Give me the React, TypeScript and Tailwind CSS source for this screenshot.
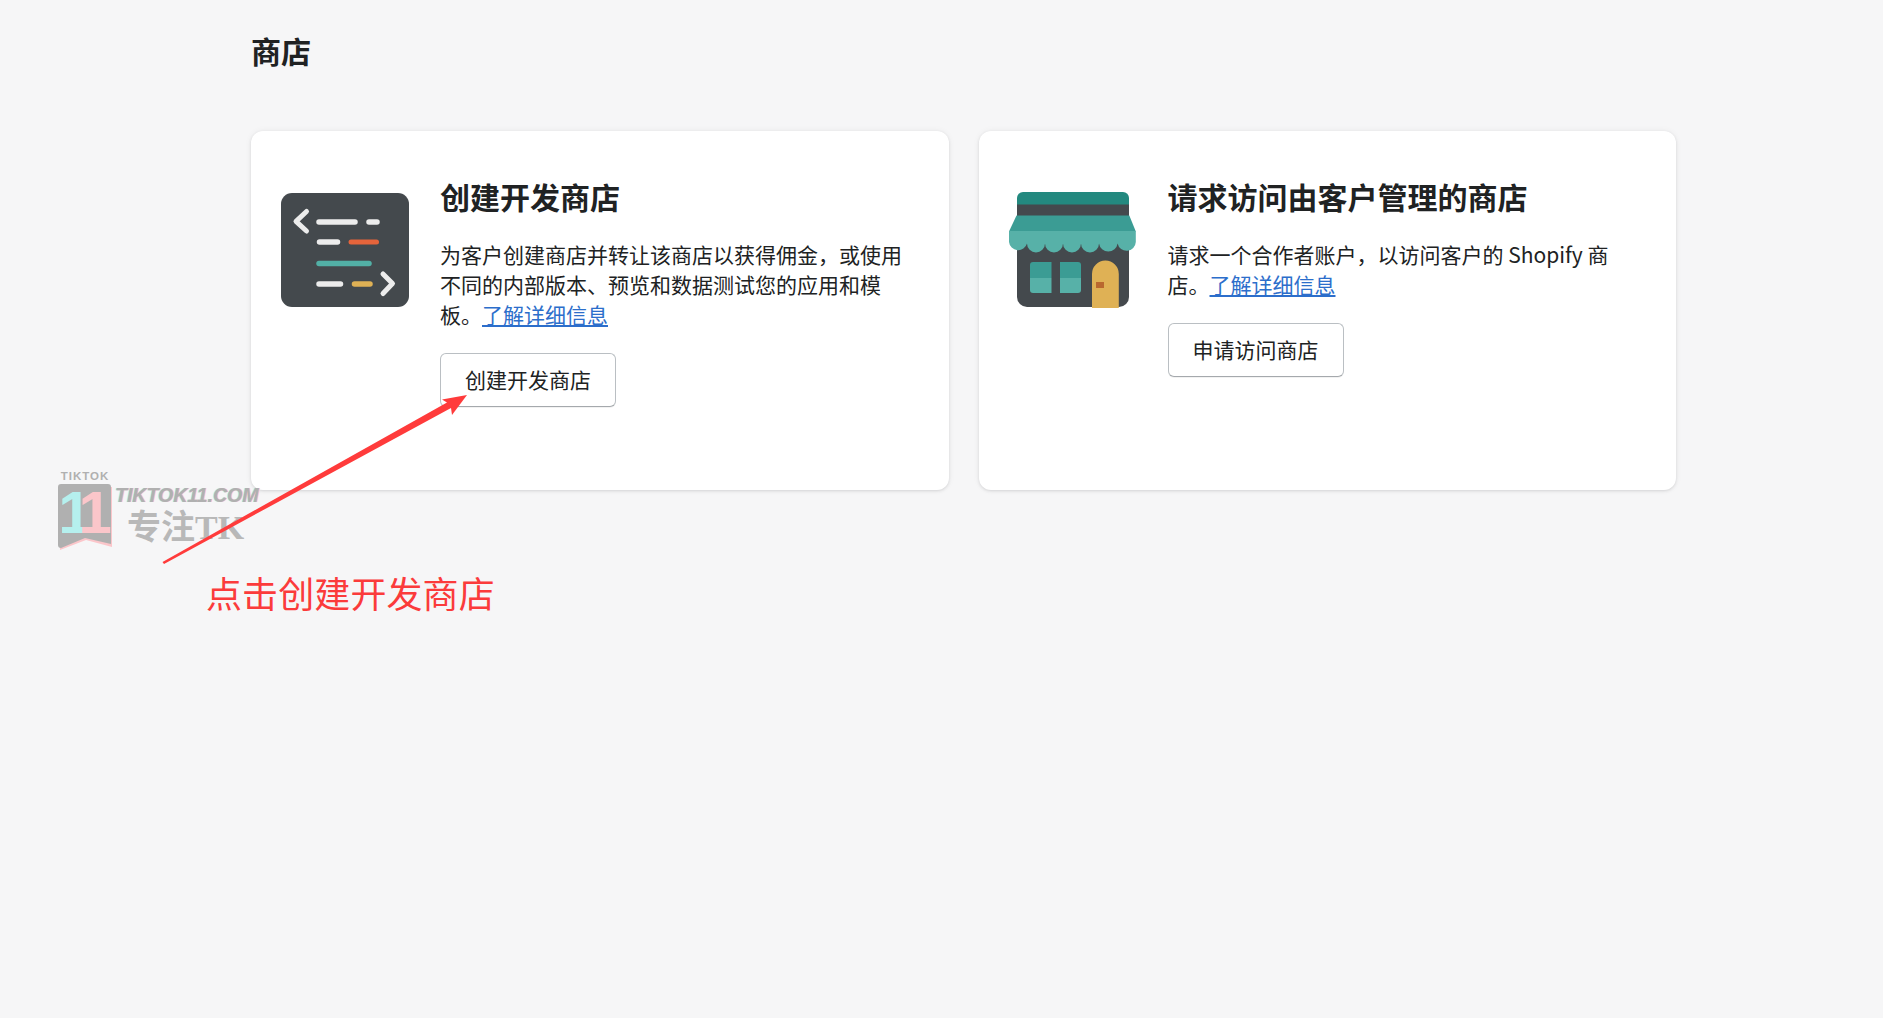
import React from "react";

const font = { fontFamily: '"Noto Sans CJK SC", "Noto Sans", sans-serif' };
const sans = { fontFamily: '"Liberation Sans", sans-serif' };

function CodeIcon() {
  return (
    <svg width="128" height="114" viewBox="0 0 128 114" className="mt-px block">
      <rect width="128" height="114" rx="11" fill="#44494d" />
      <g fill="none" stroke="#ececec" strokeLinecap="round" strokeLinejoin="round">
        <path d="M25.5 18.5 15 28.3 25.5 38" strokeWidth="5" />
        <path d="M102 81 111.5 90.5 102 100.5" strokeWidth="5" />
        <path d="M38 29H74M88 29H96M38.5 49H56.5M38 91H59.5" strokeWidth="5.5" />
        <path d="M70 49H95.5" stroke="#e5643b" strokeWidth="5" />
        <path d="M38 70.5H88" stroke="#52b0a6" strokeWidth="5.5" />
        <path d="M73.5 91H89" stroke="#dfb155" strokeWidth="5.5" />
      </g>
    </svg>
  );
}

function StoreIcon() {
  return (
    <svg width="127" height="116" viewBox="0 0 127 116" className="block">
      <path d="M8 12H120V105a10 10 0 0 1-10 10H18a10 10 0 0 1-10-10Z" fill="#44494d" />
      <path d="M8 6a6 6 0 0 1 6-6H114a6 6 0 0 1 6 6V12.5H8Z" fill="#23897f" />
      <path d="M7.5 23.5H120.3L126.8 39.5H0Z" fill="#3b9c94" />
      <path
        d="M0 39H126.8V50a9.2 9.2 0 0 1-18.2 1.5 9.4 9.4 0 0 1-18.6 0 9 9 0 0 1-18 0 9 9 0 0 1-18 0 9 9 0 0 1-18 0 9 9 0 0 1-18 0A9.2 9.2 0 0 1 0 50Z"
        fill="#57b1a8"
      />
      <path d="M21 73a3 3 0 0 1 3-3H42.5V86H21Z" fill="#3b9c94" />
      <path d="M21 86H42.5V101H24a3 3 0 0 1-3-3Z" fill="#57b1a8" />
      <path d="M51 70H69a3 3 0 0 1 3 3V86H51Z" fill="#3b9c94" />
      <path d="M51 86H72V98a3 3 0 0 1-3 3H51Z" fill="#57b1a8" />
      <path d="M83 82a13.4 13.4 0 0 1 26.8 0V116H83Z" fill="#dfb155" />
      <rect x="87" y="90" width="8" height="6" fill="#b9682f" />
    </svg>
  );
}

function Card({
  icon,
  title,
  body,
  action,
}: {
  icon: React.ReactNode;
  title: string;
  body: string;
  action: string;
}) {
  return (
    <div className="flex h-[359px] w-[698px] rounded-[12px] bg-white pt-[30px] pl-[30px] pr-[30px] shadow-[0_0_7px_rgba(23,24,24,0.05),0_1px_3px_rgba(63,63,68,0.15)]">
      <div className="w-[159px] shrink-0 pt-[31px]">{icon}</div>
      <div className="flex-1 pt-[10px]">
        <h2 className="text-[30px] leading-[50px] font-bold text-[#202223]">{title}</h2>
        <p className="mt-[18px] text-[21px] leading-[30px] text-[#202223]">
          {body}
          <a href="#" className="text-[#2c6ecb] underline">
            了解详细信息
          </a>
        </p>
        <button className="mt-[24px] h-[54px] w-[176px] rounded-[6px] border border-[#babfc3] border-b-[#a5a9ad] bg-white text-[21px] text-[#202223] shadow-[0_1px_0_rgba(0,0,0,0.05)]">
          {action}
        </button>
      </div>
    </div>
  );
}

function Watermark() {
  return (
    <div className="absolute left-[58px] top-[469px] flex gap-[3px] text-[#b0b0b0]" style={sans}>
      <div className="flex w-[54px] flex-col items-center">
        <span className="text-[11.5px] leading-[15px] font-bold tracking-[1px]">TIKTOK</span>
        <div className="relative h-[66px] w-[54px]">
          <svg width="54" height="66" viewBox="0 0 54 66" className="block">
            <path d="M1 3H54V63L28 56 2 66Z" fill="#fbc6ca" />
            <path d="M0 3a3 3 0 0 1 3-3H50a3 3 0 0 1 3 3V60L27 54 3 64a3 3 0 0 1-3-3Z" fill="#b0b0b0" />
          </svg>
          <div className="absolute inset-x-0 top-[5px] flex justify-center pr-[13px] text-[60px] leading-[48px] font-bold tracking-[-13px]">
            <span className="text-[#b5f0ee]">1</span>
            <span className="text-[#fbc6ca]">1</span>
          </div>
        </div>
      </div>
      <div className="flex flex-col pt-[15px]">
        <span className="text-[19.5px] leading-[22px] font-bold italic whitespace-nowrap [text-shadow:1px_0_#f8c2c8,-1px_0_#b5eeee]">
          TIKTOK11.COM
        </span>
        <span
          className="ml-[12px] mt-[2px] text-[34px] leading-[40px] font-bold whitespace-nowrap text-[#b8b8b8]"
          style={{ fontFamily: '"Liberation Serif", "Noto Sans CJK SC", serif' }}
        >
          专注TK
        </span>
      </div>
    </div>
  );
}

export default function App() {
  return (
    <div className="relative h-[1018px] w-full overflow-hidden bg-[#f6f6f7]" style={font}>
      <div className="ml-[251px] w-[1425px] pt-[28px]">
        <h1 className="text-[30px] leading-[44px] font-bold text-[#202223]">商店</h1>
        <div className="mt-[59px] flex gap-[30px]">
          <Card
            icon={<CodeIcon />}
            title="创建开发商店"
            body="为客户创建商店并转让该商店以获得佣金，或使用不同的内部版本、预览和数据测试您的应用和模板。"
            action="创建开发商店"
          />
          <Card
            icon={<StoreIcon />}
            title="请求访问由客户管理的商店"
            body="请求一个合作者账户，以访问客户的 Shopify 商店。"
            action="申请访问商店"
          />
        </div>
      </div>

      <Watermark />

      {/* annotation arrow */}
      <svg width="1883" height="1018" className="pointer-events-none absolute left-0 top-0">
        <polygon points="162.5,562 447,402.5 442,399.5 467,395 452,415 451,408 164,564" fill="#ff3b3b" />
      </svg>
      <span className="absolute left-[206px] top-[566px] text-[36px] leading-[52px] tracking-[0.1px] whitespace-nowrap text-[#fb3b3b]">
        点击创建开发商店
      </span>
    </div>
  );
}
